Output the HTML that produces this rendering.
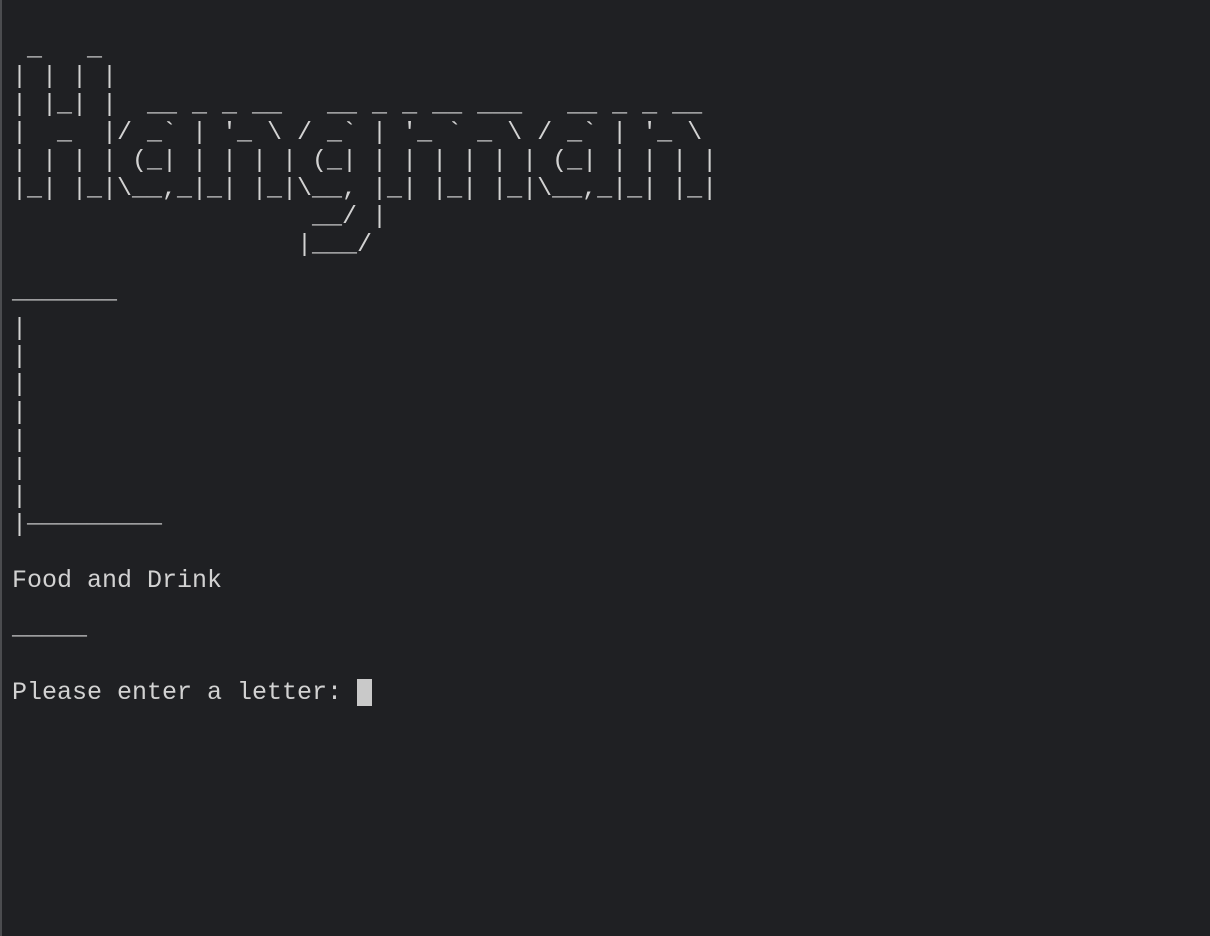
<!DOCTYPE html>
<html><head><meta charset="utf-8"><style>
html,body{margin:0;padding:0;background:#1f2023;width:1210px;height:936px;overflow:hidden}
body{border-left:2px solid #4b4c4f;box-sizing:border-box}
pre{margin:0;position:absolute;left:12px;top:35px;font-family:"Liberation Mono",monospace;font-size:25px;line-height:28px;color:#d2d2d2;white-space:pre}
.u{position:relative;top:-9px}
.cur{display:inline-block;width:15px;height:27px;background:#c9c9c9;vertical-align:top;margin-top:0px}
</style></head><body><pre> _   _
| | | |
| |_| |  __ _ _ __   __ _ _ __ ___   __ _ _ __
|  _  |/ _` | '_ \ / _` | '_ ` _ \ / _` | '_ \
| | | | (_| | | | | (_| | | | | | | (_| | | | |
|_| |_|\__,_|_| |_|\__, |_| |_| |_|\__,_|_| |_|
                    __/ |
                   |___/

<span class="u">_______</span>
|
|
|
|
|
|
|
|<span class="u">_________</span>

Food and Drink

<span class="u">_____</span>

Please enter a letter: <span class="cur"></span></pre></body></html>
